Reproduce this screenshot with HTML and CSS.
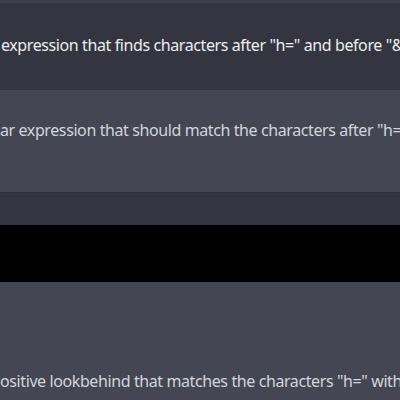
FILE: index.html
```html
<!DOCTYPE html>
<html>
<head>
<meta charset="utf-8">
<link rel="stylesheet" href="styles.css">
</head>
<body>
<div class="thread">
  <div class="topline"></div>
  <div class="msg user">
    <p class="text">expression that finds characters after "h=" and before "&amp;"</p>
  </div>
  <div class="msg bot first">
    <p class="text">ar expression that should match the characters after "h=" and before "&amp;":</p>
  </div>
  <div class="spacer"></div>
  <div class="code"></div>
  <div class="msg bot last">
    <p class="text">ositive lookbehind that matches the characters "h=" without including them in the match</p>
  </div>
</div>
</body>
</html>
```
FILE: styles.css
```css
html, body {
  margin: 0;
  padding: 0;
  width: 400px;
  height: 400px;
  overflow: hidden;
  background: #444654;
}
.thread {
  display: flex;
  flex-direction: column;
  font-family: "Noto Sans", "Open Sans", sans-serif;
  font-size: 16px;
  line-height: 24px;
  letter-spacing: -0.4px;
}
.topline {
  height: 3px;
  background: #40414f;
}
.msg {
  display: flex;
  overflow: hidden;
}
.text {
  margin: 0;
  white-space: nowrap;
}
.user {
  height: 87px;
  background: #343541;
  color: #ececf1;
  align-items: flex-start;
}
.user .text {
  padding-top: 30px;
  padding-left: 1px;
}
.bot {
  background: #444654;
  color: #d1d5db;
}
.first {
  height: 102px;
  border-bottom: 1px solid #2f303b;
}
.first .text {
  padding-top: 28px;
}
.spacer {
  height: 32px;
  background: #343541;
}
.code {
  height: 57px;
  background: #000000;
}
.last {
  flex: 1;
  height: 118px;
}
.last .text {
  padding-top: 87px;
}
```
